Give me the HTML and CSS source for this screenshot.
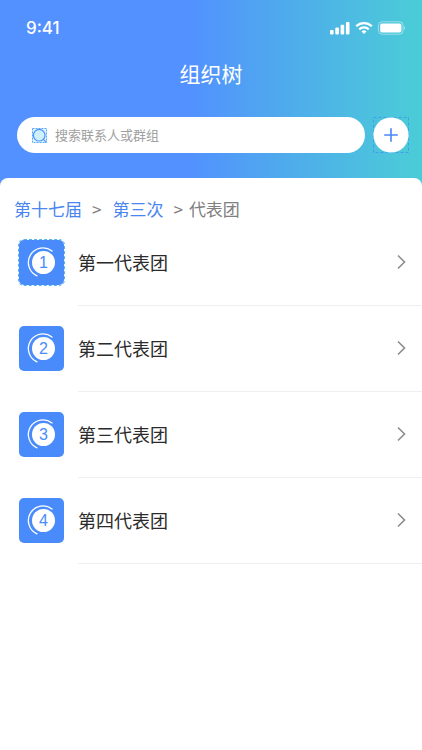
FILE: index.html
```html
<!DOCTYPE html>
<html lang="zh-CN">
<head>
    <meta charset="UTF-8">
    <meta name="viewport" content="width=device-width, initial-scale=1.0">
    <title>组织树</title>
    <link rel="stylesheet" href="styles.css">
</head>
<body>
    <header class="header">
        <div class="status-bar">
            <span class="time">9:41</span>
            <div class="status-icons">
                <svg width="20" height="14" viewBox="0 0 20 14" fill="#fff">
                    <rect x="0" y="9" width="3.6" height="4.4" rx="1"/>
                    <rect x="5.3" y="6.6" width="3.6" height="6.8" rx="1"/>
                    <rect x="10.6" y="3.8" width="3.6" height="9.6" rx="1"/>
                    <rect x="15.9" y="1" width="3.6" height="12.4" rx="1"/>
                </svg>
                <svg width="18" height="14" viewBox="0 0 18 14" fill="none" stroke="#fff" stroke-width="2.2">
                    <path d="M1.2 5.2a11.2 11.2 0 0 1 15.6 0"/>
                    <path d="M4.2 8.4a6.9 6.9 0 0 1 9.6 0"/>
                    <path d="M9 13.1l-2.5-2.6a3.6 3.6 0 0 1 5 0z" fill="#fff" stroke="none"/>
                </svg>
                <svg width="28" height="14" viewBox="0 0 28 14">
                    <rect x="0.5" y="0.8" width="24.6" height="12.4" rx="3.6" fill="none" stroke="#fff" stroke-opacity="0.45"/>
                    <rect x="2.2" y="2.5" width="21.2" height="9" rx="1.8" fill="#fff"/>
                    <path d="M26.2 5v4.2c1.2-.6 1.2-3.6 0-4.2z" fill="#fff" fill-opacity="0.5"/>
                </svg>
            </div>
        </div>
        <h1 class="title">组织树</h1>
        <div class="search-row">
            <label class="search-box">
                <svg width="15" height="15" viewBox="0 0 15 15" fill="none">
                    <rect x="0.5" y="0.5" width="14" height="14" fill="#e3f6ff" stroke="#5aa9f5" stroke-dasharray="2 1"/>
                    <circle cx="7.2" cy="7.2" r="5.8" fill="#cdf1ff" stroke="#4c94f8" stroke-width="1.2"/>
                    <path d="M11.4 11.4l2.8 2.8" stroke="#4c94f8" stroke-width="1.3"/>
                </svg>
                <input type="text" class="search-input" placeholder="搜索联系人或群组" aria-label="搜索联系人或群组">
            </label>
            <button type="button" class="add-button" aria-label="添加">
                <svg width="36" height="36" viewBox="0 0 36 36" fill="none">
                    <rect x="0.5" y="0.5" width="35" height="35" stroke="#3fa0e6" stroke-dasharray="3 2"/>
                    <circle cx="18" cy="18" r="17.6" fill="#fff"/>
                    <path d="M18 11.2v13.6M11.2 18h13.6" stroke="#4a86f7" stroke-width="1.6"/>
                </svg>
            </button>
        </div>
    </header>

    <main class="panel">
        <nav class="breadcrumb">
            <a href="#">第十七届</a>
            <span class="arrow">&gt;</span>
            <a href="#">第三次</a>
            <span class="arrow last">&gt;</span>
            <span>代表团</span>
        </nav>

        <ul class="list">
            <li>
                <a href="#" class="item">
                    <span class="icon selected">
                        <svg class="ring" viewBox="0 0 45 45"><path d="M33 11A14.6 14.6 0 1 0 18 35.8"/></svg>
                        <span class="number">1</span>
                    </span>
                    <span class="item-body">
                        <span>第一代表团</span>
                        <svg class="chevron" viewBox="0 0 9 16"><path d="M1 1.5L7.5 8 1 14.5"/></svg>
                    </span>
                </a>
            </li>
            <li>
                <a href="#" class="item">
                    <span class="icon">
                        <svg class="ring" viewBox="0 0 45 45"><path d="M33 11A14.6 14.6 0 1 0 18 35.8"/></svg>
                        <span class="number">2</span>
                    </span>
                    <span class="item-body">
                        <span>第二代表团</span>
                        <svg class="chevron" viewBox="0 0 9 16"><path d="M1 1.5L7.5 8 1 14.5"/></svg>
                    </span>
                </a>
            </li>
            <li>
                <a href="#" class="item">
                    <span class="icon">
                        <svg class="ring" viewBox="0 0 45 45"><path d="M33 11A14.6 14.6 0 1 0 18 35.8"/></svg>
                        <span class="number">3</span>
                    </span>
                    <span class="item-body">
                        <span>第三代表团</span>
                        <svg class="chevron" viewBox="0 0 9 16"><path d="M1 1.5L7.5 8 1 14.5"/></svg>
                    </span>
                </a>
            </li>
            <li>
                <a href="#" class="item">
                    <span class="icon">
                        <svg class="ring" viewBox="0 0 45 45"><path d="M33 11A14.6 14.6 0 1 0 18 35.8"/></svg>
                        <span class="number">4</span>
                    </span>
                    <span class="item-body">
                        <span>第四代表团</span>
                        <svg class="chevron" viewBox="0 0 9 16"><path d="M1 1.5L7.5 8 1 14.5"/></svg>
                    </span>
                </a>
            </li>
        </ul>
    </main>
</body>
</html>
```

FILE: styles.css
```css
* {
  margin: 0;
  padding: 0;
  box-sizing: border-box;
}

body {
  background: #fff;
  color: #2b2b2b;
  font-family: Inter, "Noto Sans CJK SC", sans-serif;
}

svg {
  display: block;
  flex: none;
}

a {
  color: #4a86f0;
  text-decoration: none;
}

/* the extra bottom padding runs behind the panel's round corners */
.header {
  padding: 16px 0 37px;
  background: linear-gradient(to right, #5291ff 45%, #4fa8ee 65%, #4bcbd8 98%);
}

.status-bar {
  display: flex;
  justify-content: space-between;
  align-items: center;
  height: 24px;
  padding: 0 16px 0 26px;
}

.time {
  color: #fff;
  font-size: 17px;
  font-weight: 500;
}

.status-icons {
  display: flex;
  gap: 5px;
}

.title {
  margin-top: 20px;
  color: #fff;
  font-size: 21px;
  font-weight: 400;
  line-height: 30px;
  text-align: center;
}

.search-row {
  display: flex;
  gap: 8px;
  margin-top: 27px;
  padding: 0 13px 0 17px;
}

.search-box {
  display: flex;
  flex: 1;
  align-items: center;
  gap: 8px;
  height: 36px;
  padding: 0 15px;
  border-radius: 18px;
  background: #fff;
}

.search-input {
  flex: 1;
  min-width: 0;
  border: none;
  outline: none;
  background: none;
  font-family: inherit;
  font-size: 13px;
}

.search-input::placeholder {
  color: #a0a0a0;
}

.add-button {
  border: none;
  background: none;
  cursor: pointer;
}

.panel {
  position: relative;
  margin-top: -12px;
  padding-top: 20px;
  border-radius: 8px 8px 0 0;
  background: #fff;
}

.breadcrumb {
  display: flex;
  padding-left: 14px;
  color: #808080;
  font-family: "Noto Sans CJK SC", sans-serif;
  font-size: 17px;
  line-height: 22px;
}

.arrow {
  margin: 0 11px 0 10px;
}

.last {
  margin-right: 6px;
}

.list {
  list-style: none;
}

.item {
  display: flex;
  align-items: center;
  gap: 14px;
  padding-left: 19px;
  color: #2b2b2b;
  font-size: 18px;
}

.item-body {
  display: flex;
  flex: 1;
  justify-content: space-between;
  align-items: center;
  height: 86px;
  padding: 0 16px 2px 0;
  border-bottom: 1px solid #efefef;
}

.icon {
  display: grid;
  width: 45px;
  height: 45px;
  margin-bottom: 2px;
  border-radius: 5px;
  background: #4a8bfc;
}

.icon > * {
  grid-area: 1 / 1;
}

.selected {
  outline: 1px dashed #58b4ee;
}

.ring {
  width: 45px;
  height: 45px;
  fill: none;
  stroke: #fff;
  stroke-width: 1.3;
  stroke-linecap: round;
}

.number {
  width: 23px;
  height: 23px;
  margin: 11px 0 0 13px;
  border-radius: 50%;
  background: #fff;
  color: #4a8bfc;
  font-family: "Liberation Sans", Arial, sans-serif;
  font-size: 16px;
  line-height: 23px;
  text-align: center;
}

.chevron {
  width: 9px;
  height: 16px;
  fill: none;
  stroke: #8c8c8c;
  stroke-width: 1.6;
}
```
